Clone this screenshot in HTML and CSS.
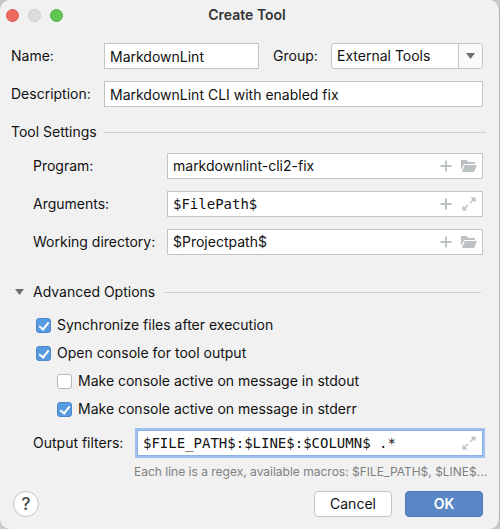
FILE: index.html
```html
<!DOCTYPE html>
<html lang="en">
<head>
<meta charset="utf-8">
<title>Create Tool</title>
<link rel="stylesheet" href="styles.css">
</head>
<body>
<svg class="sprite" aria-hidden="true">
  <symbol id="plus" viewBox="0 0 16 16"><path d="M8 2.500v11M2.500 8h11" fill="none" stroke="currentColor" stroke-width="2"/></symbol>
  <symbol id="folder" viewBox="0 0 16 16"><path d="M0 12V2h5.600l1.500 2H14v2H3.200zM.8 14l3-7H16l-3 7z" fill="currentColor"/></symbol>
  <symbol id="expand" viewBox="0 0 16 16"><path d="M9.500 1.500h5v5zM1.500 9.500v5h5z" fill="currentColor"/><path d="M13 3L9 7M7 9l-4 4" fill="none" stroke="currentColor" stroke-width="1.500"/></symbol>
</svg>
<form class="dialog">
  <header class="titlebar">
    <div class="lights"><span class="light red"></span><span class="light gray"></span><span class="light green"></span></div>
    <h1>Create Tool</h1>
  </header>
  <div class="general">
    <label for="name">Name:</label>
    <div class="pair">
      <input class="field" id="name" type="text" value="MarkdownLint">
      <label for="group">Group:</label>
      <div class="combo">
        <select id="group"><option>External Tools</option></select>
        <span class="combo-arrow"><svg width="9" height="6" viewBox="0 0 9 6"><path d="M0 0h9L4.500 6z" fill="#6e6e6e"/></svg></span>
      </div>
    </div>
    <label for="description">Description:</label>
    <input class="field" id="description" type="text" value="MarkdownLint CLI with enabled fix">
  </div>
  <h2 class="section">Tool Settings</h2>
  <div class="settings">
    <label for="program">Program:</label>
    <div class="field box">
      <input id="program" type="text" value="markdownlint-cli2-fix">
      <button type="button" aria-label="Insert macro"><svg><use href="#plus"/></svg></button>
      <button type="button" aria-label="Browse"><svg><use href="#folder"/></svg></button>
    </div>
    <label for="arguments">Arguments:</label>
    <div class="field box">
      <input class="mono" id="arguments" type="text" value="$FilePath$">
      <button type="button" aria-label="Insert macro"><svg><use href="#plus"/></svg></button>
      <button type="button" aria-label="Expand"><svg><use href="#expand"/></svg></button>
    </div>
    <label for="directory">Working directory:</label>
    <div class="field box">
      <input id="directory" type="text" value="$Projectpath$">
      <button type="button" aria-label="Insert macro"><svg><use href="#plus"/></svg></button>
      <button type="button" aria-label="Browse"><svg><use href="#folder"/></svg></button>
    </div>
  </div>
  <h2 class="section advanced"><svg width="9" height="6" viewBox="0 0 9 6"><path d="M0 0h9L4.500 6z" fill="#6e6e6e"/></svg>Advanced Options</h2>
  <div class="checks">
    <label><input type="checkbox" checked>Synchronize files after execution</label>
    <label><input type="checkbox" checked>Open console for tool output</label>
    <label class="nested"><input type="checkbox">Make console active on message in stdout</label>
    <label class="nested"><input type="checkbox" checked>Make console active on message in stderr</label>
  </div>
  <div class="filters">
    <label for="filters">Output filters:</label>
    <div class="field box focused">
      <input class="mono" id="filters" type="text" value="$FILE_PATH$:$LINE$:$COLUMN$ .*">
      <button type="button" aria-label="Expand"><svg><use href="#expand"/></svg></button>
    </div>
    <p class="hint">Each line is a regex, available macros: $FILE_PATH$, $LINE$...</p>
  </div>
  <footer class="actions">
    <button class="help" type="button" aria-label="Help">?</button>
    <button class="btn" type="button">Cancel</button>
    <button class="btn primary" type="submit">OK</button>
  </footer>
</form>
</body>
</html>
```
FILE: styles.css
```css
*, *::after { box-sizing: border-box; }

body {
  margin: 0;
  background: #c8c8c8;
  color: #111;
  font: 14px/20px Inter, sans-serif;
}

.sprite { display: none; }

input, select, button {
  font: inherit;
  color: inherit;
}

input, p, h1, h2 { margin: 0; }

label { white-space: nowrap; }

.dialog {
  padding: 0 16px 12px 11px;
  background: #f1f1f1;
  border-right: 1px solid #b4b4b4;
  border-radius: 10px;
}

.titlebar {
  display: grid;
  grid-template-columns: 1fr auto 1fr;
  align-items: center;
  height: 30px;
}

.titlebar h1 {
  font-size: 14px;
  font-weight: 600;
  color: #333;
}

.lights {
  display: flex;
  gap: 9px;
  margin-left: -5px;
}

.light {
  width: 13px;
  height: 13px;
  border: 1px solid;
  border-radius: 50%;
}

.red { background: #ed6a5e; border-color: #d95a50; }
.gray { background: #dcdcdc; border-color: #cccccc; }
.green { background: #61c554; border-color: #50b242; }

.general, .settings, .filters {
  display: grid;
  align-items: center;
  gap: 12px;
}

.general {
  grid-template-columns: 81px 1fr;
  margin-top: 13px;
}

.pair {
  display: grid;
  grid-template-columns: 155px 1fr 152px;
  align-items: center;
}

.pair label { padding-left: 14px; }

.field {
  width: 100%;
  height: 26px;
  padding: 0 5px;
  background: #fff;
  border: 1px solid #c4c4c4;
  outline: none;
}

.combo {
  display: flex;
  height: 26px;
  background: #fff;
  border: 1px solid #c4c4c4;
  border-radius: 3px;
  overflow: hidden;
}

.combo select {
  flex: 1;
  min-width: 0;
  padding: 0 5px;
  background: none;
  border: 0;
  outline: none;
  appearance: none;
}

.combo-arrow {
  display: grid;
  place-items: center;
  width: 24px;
  background: #fafafa;
  border-left: 1px solid #c4c4c4;
}

.section {
  display: flex;
  align-items: center;
  gap: 7px;
  margin: 15px -3px 11px 0;
  font-size: 14px;
  font-weight: 400;
}

.section::after {
  content: "";
  flex: 1;
  height: 1px;
  background: #d0d0d0;
}

.settings {
  grid-template-columns: 122px 1fr;
  padding-left: 22px;
}

.box {
  display: flex;
  align-items: center;
  gap: 7px;
}

.box input {
  flex: 1;
  min-width: 0;
  padding: 0;
  background: none;
  border: 0;
  outline: none;
}

.box button {
  display: flex;
  padding: 0;
  background: none;
  border: 0;
  color: #bcc1c4;
}

.box svg {
  width: 16px;
  height: 16px;
}

.box .mono { font-family: "DejaVu Sans Mono", monospace; }

.advanced {
  gap: 9px;
  margin: 27px 2px 9px 4px;
}

.checks {
  display: grid;
  padding-left: 25px;
}

.checks label {
  display: flex;
  align-items: center;
  gap: 6px;
  height: 28px;
}

.checks .nested { padding-left: 21px; }

.checks input {
  position: relative;
  width: 15px;
  height: 15px;
  background: #fff;
  border: 1px solid #b8b8b8;
  border-radius: 3px;
  appearance: none;
}

.checks input:checked {
  background: #589ae0;
  border-color: #4a88cf;
}

.checks input:checked::after {
  content: "";
  position: absolute;
  left: 4px;
  top: 1px;
  width: 6px;
  height: 10px;
  border: solid #fff;
  border-width: 0 2px 2px 0;
  transform: rotate(38deg);
}

.filters {
  grid-template-columns: 92px 1fr;
  padding-left: 22px;
  margin-top: 7px;
}

.focused {
  border-color: #8ab0e4;
  box-shadow: 0 0 0 2px #9fc1f0;
}

.hint {
  grid-column: 2;
  margin: -6px -4px 0 -3px;
  font-size: 12px;
  color: #808080;
  white-space: nowrap;
}

.actions {
  display: flex;
  align-items: center;
  gap: 13px;
  margin-top: 9px;
}

.help, .btn {
  height: 26px;
  padding: 0;
  background: #fff;
  border: 1px solid #c4c4c4;
}

.help {
  width: 26px;
  margin: 0 auto 0 2px;
  border-radius: 50%;
  font-size: 17px;
  font-weight: 500;
  color: #444;
}

.btn {
  width: 78px;
  border-radius: 4px;
}

.primary {
  background: #5a87c5;
  border-color: #4c7ab8;
  color: #fff;
  font-weight: 600;
}
```
